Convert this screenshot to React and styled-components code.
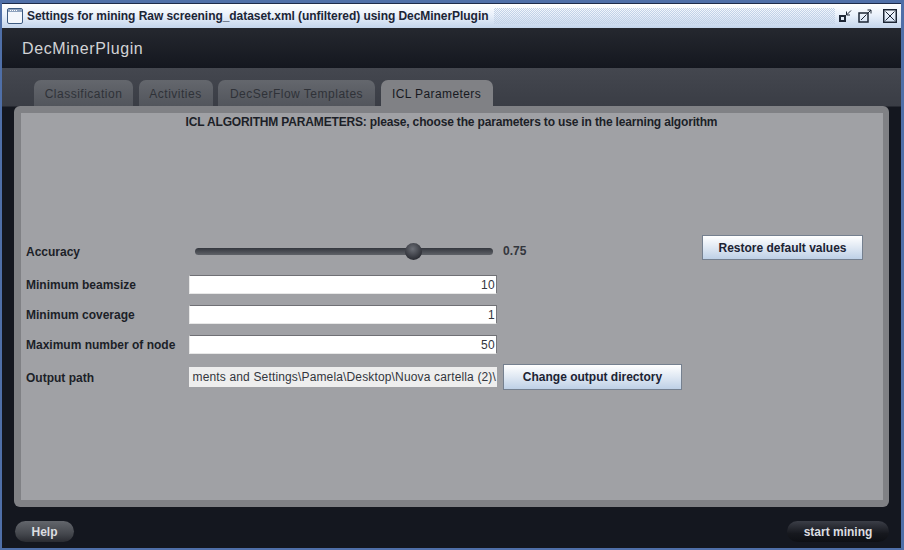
import React from "react";
import styled, { createGlobalStyle } from "styled-components";

const GlobalStyle = createGlobalStyle`
  html, body {
    margin: 0;
    padding: 0;
    background: #ffffff;
  }
  body {
    font-family: "Liberation Sans", Arial, sans-serif;
  }
`;

const Frame = styled.div`
  width: 904px;
  height: 550px;
  box-sizing: border-box;
  padding: 3px 3px 2px 2px;
  background: #4f6fa8;
  display: flex;
  flex-direction: column;
  overflow: hidden;
`;

const TitleBar = styled.div`
  height: 25px;
  flex: none;
  box-sizing: border-box;
  border-top: 1px solid #1d2b4a;
  padding: 0 4px 0 5px;
  display: flex;
  align-items: center;
  background: linear-gradient(#ffffff 0%, #eaf1fb 45%, #c4d5ec 100%);
`;

const TitleText = styled.span`
  margin-left: 4px;
  font-size: 12px;
  font-weight: 700;
  letter-spacing: -0.05px;
  color: #1c2536;
  white-space: nowrap;
`;

const Dots = styled.div`
  flex: 1;
  height: 16px;
  margin: 0 4px 0 6px;
  background: repeating-conic-gradient(#c3d2e7 0 25%, transparent 0 50%) 0 0 / 2px 2px;
`;

const TitleButtons = styled.div`
  display: flex;
  align-items: center;
  gap: 6px;
`;

const CloseSlot = styled.div`
  display: flex;
  margin-left: 5px;
`;

const Header = styled.div`
  height: 40px;
  flex: none;
  box-sizing: border-box;
  padding: 2px 0 0 20px;
  display: flex;
  align-items: center;
  background: linear-gradient(#25282f, #14171f);
  color: #d2d3d6;
  font-size: 16px;
  font-weight: 400;
  letter-spacing: 0.6px;
`;

const Content = styled.div`
  flex: 1;
  min-height: 0;
  display: flex;
  flex-direction: column;
  padding: 12px 12px 0 12px;
  background: linear-gradient(#44474f 0px, #3a3d45 38px, #14171f 39px, #14171f 100%);
`;

const TabRow = styled.div`
  height: 26px;
  flex: none;
  display: flex;
  padding-left: 20px;
  gap: 5.5px;
`;

const Tab = styled.div`
  width: ${(props) => props.$width}px;
  box-sizing: border-box;
  display: flex;
  align-items: center;
  justify-content: center;
  padding-top: 2px;
  border-radius: 7px 7px 0 0;
  font-size: 12px;
  letter-spacing: ${(props) => (props.$active ? "0.4px" : "0.5px")};
  color: ${(props) => (props.$active ? "#17191f" : "#2f3238")};
  background: ${(props) =>
    props.$active ? "#808185" : "linear-gradient(#64676d, #52555c)"};
`;

const Panel = styled.div`
  height: 401px;
  width: 875px;
  flex: none;
  box-sizing: border-box;
  padding: 7px 6px 7px 7px;
  border-radius: 6px;
  background: #808185;
`;

const Inner = styled.div`
  height: 100%;
  box-sizing: border-box;
  padding: 2px 20px 0 5px;
  background: #a0a1a5;
  color: #1c1f28;
  font-size: 12px;
`;

const PanelTitle = styled.div`
  text-align: center;
  font-weight: 700;
  line-height: 14px;
  letter-spacing: -0.16px;
  padding-left: 14px;
  margin-bottom: 106px;
`;

const SliderRow = styled.div`
  height: 32px;
  display: flex;
  align-items: flex-start;
  margin-bottom: 7px;
`;

const SliderControls = styled.div`
  height: 32px;
  display: flex;
  align-items: center;
`;

const Row = styled.div`
  height: 20px;
  display: flex;
  align-items: center;
  margin-bottom: 10px;
`;

const PathRow = styled(Row)`
  height: 26px;
  margin-top: 10px;
`;

const Label = styled.label`
  width: 163px;
  flex: none;
  padding-top: 1px;
  font-weight: 700;
  white-space: nowrap;
`;

const Track = styled.div`
  position: relative;
  width: 298px;
  height: 7px;
  margin-left: 6px;
  border-radius: 4px;
  background: linear-gradient(#34373e, #5f6268);
`;

const Thumb = styled.div`
  position: absolute;
  top: -5px;
  left: 210px;
  width: 17px;
  height: 17px;
  border-radius: 50%;
  background: radial-gradient(circle at 45% 35%, #6b6e76, #2a2c33 75%);
`;

const SliderValue = styled.span`
  margin-left: 10px;
  font-weight: 700;
  color: #33363d;
`;

const Spacer = styled.div`
  flex: 1;
`;

const Input = styled.div`
  width: 308px;
  height: 19px;
  box-sizing: border-box;
  border-top: 1px solid #6f7075;
  border-left: 1px solid #e8e8e8;
  border-right: 1px solid #77787c;
  border-bottom: 1px solid #e8e8e8;
  background: #ffffff;
  color: #33363d;
  padding: 0 1px;
  text-align: right;
  line-height: 18px;
  letter-spacing: 0.3px;
`;

const PathInput = styled.div`
  width: 308px;
  height: 20px;
  box-sizing: border-box;
  display: flex;
  justify-content: flex-end;
  background: #eeeeee;
  color: #33363d;
  padding: 0 1px;
  line-height: 20px;
  letter-spacing: 0.15px;
  white-space: nowrap;
`;

const Button = styled.button`
  width: ${(props) => props.$width}px;
  height: ${(props) => props.$height}px;
  margin-left: ${(props) => props.$left || 0}px;
  box-sizing: border-box;
  padding: 0;
  border: 1px solid #75808f;
  background: linear-gradient(#ffffff, #dfe8f3 50%, #bed0e6);
  color: #1c2333;
  font-family: inherit;
  font-size: 12px;
  font-weight: 700;
`;

const Footer = styled.div`
  height: 21px;
  flex: none;
  margin-top: 14px;
  width: 875px;
  box-sizing: border-box;
  padding-left: 1px;
  display: flex;
  justify-content: space-between;
`;

const RoundButton = styled.button`
  width: ${(props) => props.$width}px;
  height: 21px;
  padding: 0;
  border: none;
  border-radius: 11px;
  font-family: inherit;
  font-size: 12px;
  font-weight: 700;
  color: #dcdde0;
  background: ${(props) =>
    props.$dark
      ? "linear-gradient(#3b3e47, #16181e 60%, #0e1015)"
      : "linear-gradient(#63666c, #45484e 60%, #2a2c32)"};
`;

function WindowIcon() {
  return (
    <svg width="16" height="16" viewBox="0 0 16 16">
      <rect x="0.5" y="0.5" width="15" height="15" rx="1.5" fill="#f4f7fc" stroke="#3d5a80" />
      <rect x="1" y="1" width="14" height="3" fill="#8fa3bf" />
      <path d="M3 2.5h1M5 2.5h1M7 2.5h1M9 2.5h1" stroke="#fff" />
    </svg>
  );
}

function MinimizeIcon() {
  return (
    <svg width="13" height="14" viewBox="0 0 13 14" fill="none" stroke="#1d2635">
      <rect x="1" y="7" width="5" height="5" strokeWidth="2" />
      <path d="M12 1.5 L7.5 6 M7.5 2.5 V6 H11" />
    </svg>
  );
}

function MaximizeIcon() {
  return (
    <svg width="14" height="14" viewBox="0 0 14 14" fill="none" stroke="#1d2635">
      <rect x="1" y="4" width="9" height="9" strokeWidth="1.5" />
      <path d="M3 11 L8 6" />
      <path d="M8.5 5.5 L13 1 M9.5 1 H13 V4.5" />
    </svg>
  );
}

function CloseIcon() {
  return (
    <svg width="14" height="14" viewBox="0 0 14 14" fill="none" stroke="#1d2635">
      <rect x="0.75" y="0.75" width="12.5" height="12.5" strokeWidth="1.5" />
      <path d="M2.5 2.5 L11.5 11.5 M11.5 2.5 L2.5 11.5" />
    </svg>
  );
}

const tabs = [
  { name: "Classification", width: 99 },
  { name: "Activities", width: 74 },
  { name: "DecSerFlow Templates", width: 157 },
  { name: "ICL Parameters", width: 112, active: true },
];

const fields = [
  { label: "Minimum beamsize", value: "10" },
  { label: "Minimum coverage", value: "1" },
  { label: "Maximum number of node", value: "50" },
];

export default function App() {
  return (
    <>
      <GlobalStyle />
      <Frame>
        <TitleBar>
          <WindowIcon />
          <TitleText>
            Settings for mining Raw screening_dataset.xml (unfiltered) using DecMinerPlugin
          </TitleText>
          <Dots />
          <TitleButtons>
            <MinimizeIcon />
            <MaximizeIcon />
            <CloseSlot>
              <CloseIcon />
            </CloseSlot>
          </TitleButtons>
        </TitleBar>
        <Header>DecMinerPlugin</Header>
        <Content>
          <TabRow>
            {tabs.map((tab) => (
              <Tab key={tab.name} $width={tab.width} $active={tab.active}>
                {tab.name}
              </Tab>
            ))}
          </TabRow>
          <Panel>
            <Inner>
              <PanelTitle>
                ICL ALGORITHM PARAMETERS: please, choose the parameters to use in the learning algorithm
              </PanelTitle>
              <SliderRow>
                <SliderControls>
                  <Label>Accuracy</Label>
                  <Track>
                    <Thumb />
                  </Track>
                  <SliderValue>0.75</SliderValue>
                </SliderControls>
                <Spacer />
                <Button $width={161} $height={25}>
                  Restore default values
                </Button>
              </SliderRow>
              {fields.map((field) => (
                <Row key={field.label}>
                  <Label>{field.label}</Label>
                  <Input>{field.value}</Input>
                </Row>
              ))}
              <PathRow>
                <Label>Output path</Label>
                <PathInput>ments and Settings\Pamela\Desktop\Nuova cartella (2)\</PathInput>
                <Button $width={179} $height={26} $left={6}>
                  Change output directory
                </Button>
              </PathRow>
            </Inner>
          </Panel>
          <Footer>
            <RoundButton $width={59}>Help</RoundButton>
            <RoundButton $width={102} $dark>
              start mining
            </RoundButton>
          </Footer>
        </Content>
      </Frame>
    </>
  );
}
